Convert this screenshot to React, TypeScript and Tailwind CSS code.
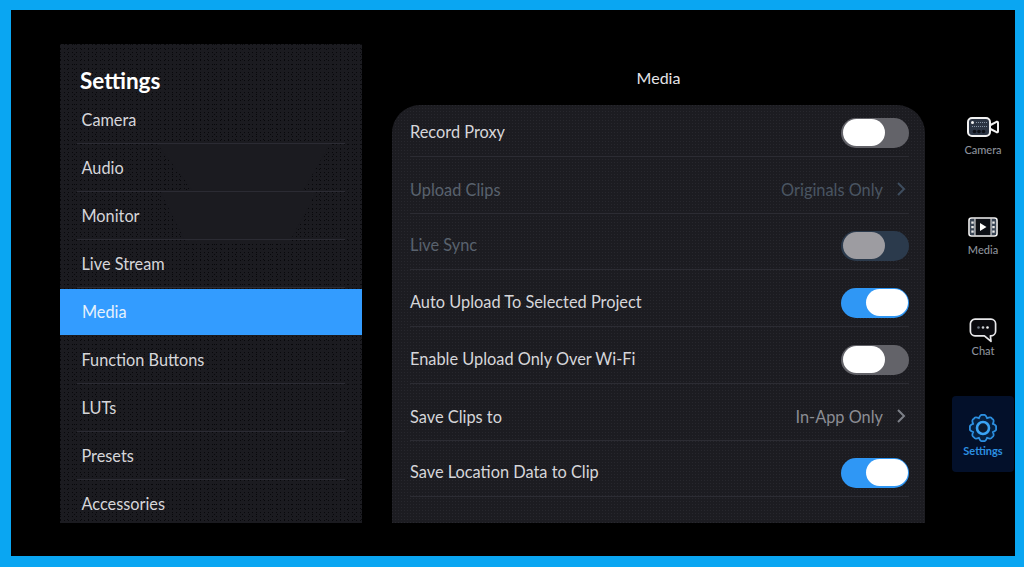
import React from "react";

const dots =
  "bg-[radial-gradient(circle_at_0.5px_0.5px,#08080b_0.7px,transparent_0.71px),radial-gradient(circle_at_0.5px_0.5px,#08080b_0.7px,transparent_0.71px)] bg-[length:4px_4px,7px_5px]";
const panelDots = "bg-[radial-gradient(circle_at_0.5px_0.5px,#27272d_0.7px,transparent_0.71px)] bg-[length:3px_3px]";

const menu = ["Camera", "Audio", "Monitor", "Live Stream", "Media", "Function Buttons", "LUTs", "Presets", "Accessories"];

function Toggle({ on, disabled }: { on?: boolean; disabled?: boolean }) {
  const track = on ? "bg-[#2f97f5] justify-end" : disabled ? "bg-[#2b3a4c] justify-start" : "bg-[#636369] justify-start";
  const knob = disabled ? "bg-[#9d9ca1]" : "bg-white";
  return (
    <div className={`flex h-[30px] w-[68px] items-center rounded-full px-[1.5px] ${track}`}>
      <div className={`h-[27px] w-[42px] rounded-full ${knob}`} />
    </div>
  );
}

function Row({ h, label, dim, value, toggle }: { h: string; label: string; dim?: boolean; value?: string; toggle?: React.ReactNode }) {
  return (
    <div className={`flex items-end ${h}`}>
      <div className="flex h-[48px] w-full items-center justify-between border-b border-[#2c2c33]">
        <span className={`text-[16.35px] ${toggle ? "" : "pt-[2px]"} ${dim ? "text-[#59626e]" : "text-[#d6d6da]"}`}>{label}</span>
        {toggle}
        {value && (
          <span className={`flex items-center gap-[13px] text-[16.35px] ${dim ? "text-[#4a5562]" : "text-[#8b8d94]"}`}>
            <span className="pt-[2px]">{value}</span>
            <svg width="10" height="16" viewBox="0 0 10 16" fill="none" stroke={dim ? "#3e4d5e" : "#7d8088"} strokeWidth="2" className="mr-[3px]">
              <path d="M2 2l6 6-6 6" />
            </svg>
          </span>
        )}
      </div>
    </div>
  );
}

function CameraIcon() {
  return (
    <svg width="32" height="20" viewBox="0 0 32 20" fill="none">
      <rect x="1" y="1" width="22" height="18" rx="4" fill="#2b3443" stroke="#f2f2f2" strokeWidth="2" />
      <circle cx="5.500" cy="5.500" r="1.500" fill="#f2f2f2" />
      <circle cx="7.500" cy="14.500" r="1.800" fill="#0c0f15" />
      <circle cx="12" cy="14.500" r="1.800" fill="#0c0f15" />
      <circle cx="16.500" cy="14.500" r="1.800" fill="#0c0f15" />
      <path d="M9 5.500h11M5 9.500h15" stroke="#8492a3" strokeWidth="1" strokeDasharray="1 1" />
      <path d="M23.500 8L29.500 4.800Q31 4.200 31 5.800V14.200Q31 15.800 29.500 15.200L23.500 12" stroke="#f2f2f2" strokeWidth="2" strokeLinejoin="round" />
    </svg>
  );
}

function MediaIcon() {
  return (
    <svg width="30" height="20" viewBox="0 0 30 20" fill="none">
      <rect x="1" y="1" width="28" height="18" rx="2.500" fill="#0c0f15" stroke="#f2f2f2" strokeWidth="1.600" />
      <rect x="2" y="2" width="5" height="16" fill="#3a4656" />
      <rect x="23" y="2" width="5" height="16" fill="#3a4656" />
      <path d="M7 1.500v17M23 1.500v17" stroke="#f2f2f2" strokeWidth="1" />
      {[4.500, 9, 13.500].map((y) => (
        <React.Fragment key={y}>
          <rect x="3.300" y={y} width="2.400" height="2.200" fill="#e8e8e8" />
          <rect x="24.300" y={y} width="2.400" height="2.200" fill="#e8e8e8" />
        </React.Fragment>
      ))}
      <path d="M12 6l6.500 4-6.500 4z" fill="#fff" />
    </svg>
  );
}

function ChatIcon() {
  return (
    <svg width="28" height="25" viewBox="0 0 28 25" fill="none" className="mt-[4px]">
      <path
        d="M6 1.200h16a4.600 4.600 0 0 1 4.600 4.600v7.400a4.600 4.600 0 0 1-4.600 4.600h-.6l.6 5.600-6.600-5.600H6a4.600 4.600 0 0 1-4.600-4.600V5.800a4.600 4.600 0 0 1 4.600-4.600z"
        fill="#0a0a0e"
        stroke="#e8e8ea"
        strokeWidth="1.700"
        strokeLinejoin="round"
      />
      <circle cx="9.500" cy="9.500" r="1.300" fill="#6b7480" />
      <circle cx="14" cy="9.500" r="1.300" fill="#c9ccd1" />
      <circle cx="18.500" cy="9.500" r="1.300" fill="#f2f2f2" />
    </svg>
  );
}

function GearIcon() {
  const d: string[] = [];
  const n = 8;
  const p = (r: number, t: number) => `${(14 + r * Math.sin(t)).toFixed(2)} ${(14 - r * Math.cos(t)).toFixed(2)}`;
  for (let i = 0; i < n; i++) {
    const a = (i / n) * Math.PI * 2;
    const a2 = ((i + 0.5) / n) * Math.PI * 2;
    const a3 = ((i + 1) / n) * Math.PI * 2;
    if (i === 0) d.push(`M${p(13, a)}`);
    d.push(`Q${p(14.2, (a + a2) / 2)} ${p(10.6, a2)}`);
    d.push(`Q${p(14.2, (a2 + a3) / 2)} ${p(13, a3)}`);
  }
  return (
    <svg width="28" height="28" viewBox="0 0 28 28" fill="none" stroke="#2c8fe0" className="-mt-[1px]">
      <path d={d.join(" ") + "z"} strokeWidth="1.800" strokeLinejoin="round" fill="#062040" />
      <circle cx="14" cy="14" r="6" strokeWidth="2.600" stroke="#3aa4f5" fill="#0a1a30" />
    </svg>
  );
}

function RailItem({ icon, label, active, className }: { icon: React.ReactNode; label: string; active?: boolean; className?: string }) {
  return (
    <div className={`flex h-[76px] w-[62px] flex-col items-center rounded-[4px] pt-[18px] ${active ? "bg-[#03102a]" : ""} ${className ?? ""}`}>
      <div className="flex h-[28px] items-center justify-center">{icon}</div>
      <span className={`mt-[2px] text-[11px] leading-[14px] ${active ? "font-bold text-[#2c8fe0]" : "font-medium text-[#8d929b]"}`}>{label}</span>
    </div>
  );
}

export default function App() {
  return (
    <div
      className="h-[567px] w-[1024px] overflow-hidden border-t-[10px] border-r-[9px] border-b-[11px] border-l-[11px] border-[#0aa6f2] bg-black [text-rendering:optimizeLegibility]"
      style={{ fontFamily: "Lato, 'Noto Sans', sans-serif" }}
    >
      <div className="flex pt-[34px] pl-[49px]">
        <aside className={`relative isolate flex h-[479px] w-[302px] flex-col overflow-hidden bg-[#1b1b20] ${dots}`}>
          <div className="absolute inset-0 -z-10 bg-[#1b1b20] [clip-path:polygon(97px_100px,270px_100px,243px_147px,257px_147px,230px_197px,125px_197px,100px_147px,133px_147px)]" />
          <h1 className="mt-[22px] h-[31px] pl-[20px] text-[22.500px] leading-[30px] font-bold text-white">Settings</h1>
          {menu.map((m) =>
            m === "Media" ? (
              <div key={m} className="relative z-10 my-[1px] flex h-[46px] shrink-0 items-center bg-[#339cff] pl-[22px] text-[16.300px] text-[#e6f1fb]">
                {m}
              </div>
            ) : (
              <div key={m} className="mx-[17px] flex h-[48px] shrink-0 items-center border-b border-[#2b2b33] pt-[1px] pl-[4.500px] text-[16.300px] text-[#d6d6da]">
                {m}
              </div>
            )
          )}
        </aside>

        <main className="ml-[30px] flex w-[533px] flex-col">
          <div className="flex h-[61px] justify-center pt-[23px] text-[16px] leading-[22px] text-[#e4e4e8]">Media</div>
          <div className={`h-[418px] rounded-t-[28px] bg-[#1c1c21] pr-[16px] pl-[18px] ${panelDots}`}>
            <Row h="h-[52px]" label="Record Proxy" toggle={<Toggle />} />
            <Row h="h-[57px]" label="Upload Clips" dim value="Originals Only" />
            <Row h="h-[56px]" label="Live Sync" dim toggle={<Toggle disabled />} />
            <Row h="h-[57px]" label="Auto Upload To Selected Project" toggle={<Toggle on />} />
            <Row h="h-[57px]" label="Enable Upload Only Over Wi-Fi" toggle={<Toggle />} />
            <Row h="h-[57px]" label="Save Clips to" value="In-App Only" />
            <Row h="h-[56px]" label="Save Location Data to Clip" toggle={<Toggle on />} />
          </div>
        </main>

        <nav className="ml-[27px] flex w-[62px] flex-col pt-[51px]">
          <RailItem icon={<CameraIcon />} label="Camera" />
          <RailItem icon={<MediaIcon />} label="Media" className="mt-[24px]" />
          <RailItem icon={<ChatIcon />} label="Chat" className="mt-[25px]" />
          <RailItem icon={<GearIcon />} label="Settings" active className="mt-[24px]" />
        </nav>
      </div>
    </div>
  );
}
